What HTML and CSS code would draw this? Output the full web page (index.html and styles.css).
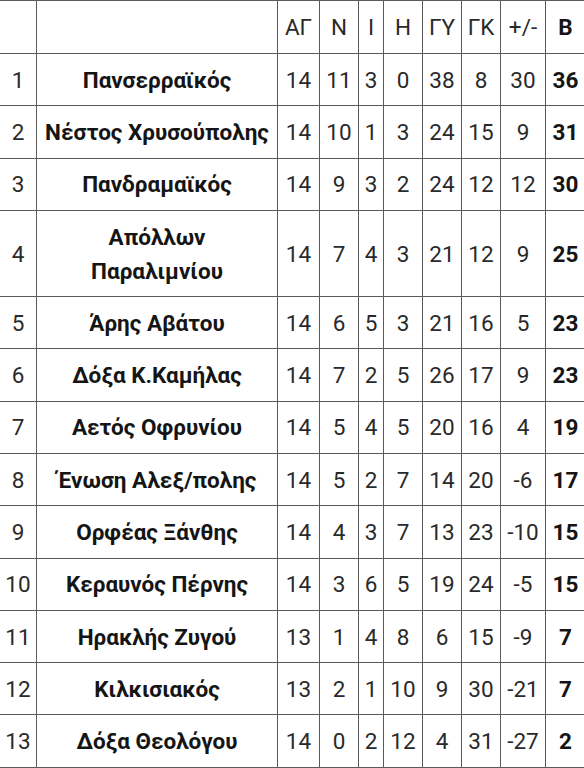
FILE: index.html
```html
<!DOCTYPE html>
<html lang="el">
<head>
<meta charset="utf-8">
<title>Βαθμολογία</title>
<link rel="stylesheet" href="styles.css">
</head>
<body>
<table class="standings">
  <colgroup>
    <col class="c-pos"><col class="c-team"><col class="c-ag"><col class="c-n"><col class="c-i"><col class="c-h"><col class="c-gy"><col class="c-gk"><col class="c-diff"><col class="c-b">
  </colgroup>
  <thead>
    <tr><th></th><th></th><th>ΑΓ</th><th>Ν</th><th>Ι</th><th>Η</th><th>ΓΥ</th><th>ΓΚ</th><th>+/-</th><th class="pts">Β</th></tr>
  </thead>
  <tbody>
    <tr><td>1</td><td class="team">Πανσερραϊκός</td><td>14</td><td>11</td><td>3</td><td>0</td><td>38</td><td>8</td><td>30</td><td class="pts">36</td></tr>
    <tr><td>2</td><td class="team">Νέστος Χρυσούπολης</td><td>14</td><td>10</td><td>1</td><td>3</td><td>24</td><td>15</td><td>9</td><td class="pts">31</td></tr>
    <tr><td>3</td><td class="team">Πανδραμαϊκός</td><td>14</td><td>9</td><td>3</td><td>2</td><td>24</td><td>12</td><td>12</td><td class="pts">30</td></tr>
    <tr><td>4</td><td class="team">Απόλλων<br>Παραλιμνίου</td><td>14</td><td>7</td><td>4</td><td>3</td><td>21</td><td>12</td><td>9</td><td class="pts">25</td></tr>
    <tr><td>5</td><td class="team">Άρης Αβάτου</td><td>14</td><td>6</td><td>5</td><td>3</td><td>21</td><td>16</td><td>5</td><td class="pts">23</td></tr>
    <tr><td>6</td><td class="team">Δόξα Κ.Καμήλας</td><td>14</td><td>7</td><td>2</td><td>5</td><td>26</td><td>17</td><td>9</td><td class="pts">23</td></tr>
    <tr><td>7</td><td class="team">Αετός Οφρυνίου</td><td>14</td><td>5</td><td>4</td><td>5</td><td>20</td><td>16</td><td>4</td><td class="pts">19</td></tr>
    <tr><td>8</td><td class="team">Ένωση Αλεξ/πολης</td><td>14</td><td>5</td><td>2</td><td>7</td><td>14</td><td>20</td><td>-6</td><td class="pts">17</td></tr>
    <tr><td>9</td><td class="team">Ορφέας Ξάνθης</td><td>14</td><td>4</td><td>3</td><td>7</td><td>13</td><td>23</td><td>-10</td><td class="pts">15</td></tr>
    <tr><td>10</td><td class="team">Κεραυνός Πέρνης</td><td>14</td><td>3</td><td>6</td><td>5</td><td>19</td><td>24</td><td>-5</td><td class="pts">15</td></tr>
    <tr><td>11</td><td class="team">Ηρακλής Ζυγού</td><td>13</td><td>1</td><td>4</td><td>8</td><td>6</td><td>15</td><td>-9</td><td class="pts">7</td></tr>
    <tr><td>12</td><td class="team">Κιλκισιακός</td><td>13</td><td>2</td><td>1</td><td>10</td><td>9</td><td>30</td><td>-21</td><td class="pts">7</td></tr>
    <tr><td>13</td><td class="team">Δόξα Θεολόγου</td><td>14</td><td>0</td><td>2</td><td>12</td><td>4</td><td>31</td><td>-27</td><td class="pts">2</td></tr>
  </tbody>
</table>
</body>
</html>
```

FILE: styles.css
```css
html, body {
  margin: 0;
  padding: 0;
  background: #ffffff;
  overflow: hidden;
}

.standings {
  border-collapse: separate;
  border-spacing: 0;
  table-layout: fixed;
  width: 585px;
  border-top: 1px solid #5a5a5a;
  font-family: Roboto, "Liberation Sans", sans-serif;
  font-size: 22.5px;
  color: #2a2a2a;
}

.c-pos { width: 37px; }
.c-team { width: 241px; }
.c-ag { width: 42px; }
.c-n { width: 39px; }
.c-i { width: 25px; }
.c-h { width: 39px; }
.c-gy { width: 39px; }
.c-gk { width: 39px; }
.c-diff { width: 45px; }
.c-b { width: 39px; }

.standings th,
.standings td {
  box-sizing: border-box;
  padding: 8.7px 0 8.6px;
  line-height: 34px;
  text-align: center;
  font-weight: 400;
  border-right: 1px solid #5a5a5a;
  border-bottom: 1px solid #5a5a5a;
  white-space: nowrap;
}

.standings th {
  padding: 9px 0 9px;
}

.standings .team {
  font-weight: 700;
  color: #151515;
}

.standings .pts {
  font-weight: 700;
  color: #151515;
  border-right: none;
}
```
